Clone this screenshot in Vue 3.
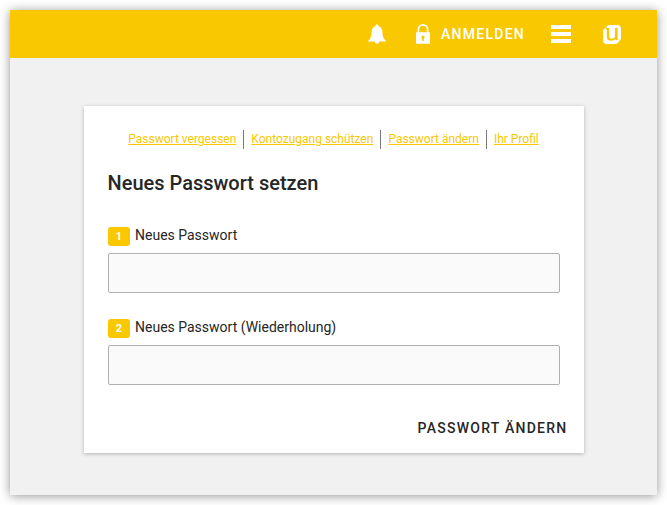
<script setup>
const links = ['Passwort vergessen', 'Kontozugang schützen', 'Passwort ändern', 'Ihr Profil']
const fields = ['Neues Passwort', 'Neues Passwort (Wiederholung)']
</script>

<template>
  <div class="window">
    <header class="bar">
      <svg class="bell" width="20" height="20" viewBox="0 0 20 20" fill="#fff">
        <path d="M10 .4c.9 0 1.500.6 1.500 1.400v.4c2.600.8 3.800 2.900 3.900 5.500.1 3.100.5 5.600 1.700 7.200l1.900 2v.7H1v-.7l1.900-2c1.200-1.600 1.600-4.100 1.700-7.200.1-2.600 1.300-4.700 3.900-5.500v-.4C8.500 1 9.100.4 10 .4zM7.700 17.600h4.600a2.300 2.200 0 0 1-4.600 0z" />
      </svg>
      <a class="login" href="#">
        <svg class="lock" width="16" height="20" viewBox="0 0 16 20">
          <path d="M3.400 9V5.300a4.600 4.400 0 0 1 9.200 0V9" fill="none" stroke="#fff" stroke-width="1.700" />
          <path d="M1.600 8.300h12.800q.6 0 .6.600v10.300q0 .6-.6.600H1.600q-.6 0-.6-.6V8.900q0-.6.6-.6z" fill="#fff" />
          <path d="M8 11.600a1.800 1.800 0 0 1 .8 3.300V17H7.200v-2.100A1.800 1.800 0 0 1 8 11.600z" fill="#fac800" />
        </svg>
        <span>ANMELDEN</span>
      </a>
      <div class="menu"><i /><i /><i /></div>
      <svg class="logo" width="20" height="20" viewBox="0 0 20 20">
        <path d="M1 7.500Q1 4.500 4 4Q4.500 1 8 1H15Q19 1 19 5V13.500Q19 16 17 17.500Q15.500 20 12.500 20H5Q1 20 1 16Z" fill="#fff" />
        <path d="M4 4H7.200V12Q7.200 14.800 9.600 14.800Q13 14.800 13 11.500V4H15.600V15.900H13.500V15Q12 16.800 9 16.800Q4.800 16.800 4.800 12.800V5.500H4Z" fill="#fac800" />
      </svg>
    </header>
    <main class="content">
      <form class="card" @submit.prevent>
        <nav class="links">
          <a v-for="link in links" :key="link" href="#">{{ link }}</a>
        </nav>
        <h1>Neues Passwort setzen</h1>
        <div v-for="(field, i) in fields" :key="field" class="field">
          <label :for="'password-' + i"><b>{{ i + 1 }}</b><span>{{ field }}</span></label>
          <input :id="'password-' + i" type="password">
        </div>
        <button type="submit">PASSWORT ÄNDERN</button>
      </form>
    </main>
  </div>
</template>

<style>
body {
  background: #fff;
}
#app {
  box-sizing: border-box;
  height: 505px;
  padding: 10px;
}
</style>

<style scoped>
.window {
  box-sizing: border-box;
  width: 647px;
  height: 485px;
  background: #f1f1f1;
  box-shadow: 0 1px 10px rgba(0, 0, 0, .42);
  font-family: Roboto, sans-serif;
  color: #262626;
}
.bar {
  box-sizing: border-box;
  height: 48px;
  padding-right: 35px;
  display: flex;
  align-items: center;
  justify-content: flex-end;
  background: #fac800;
}
.login {
  display: flex;
  align-items: center;
  margin: 0 26px 0 28px;
  color: #fff;
  font-size: 14px;
  font-weight: 500;
  letter-spacing: 1.25px;
  text-decoration: none;
}
.lock {
  margin-right: 10px;
}
.menu {
  display: flex;
  flex-direction: column;
  gap: 3px;
  width: 20px;
  margin-right: 31px;
}
.menu i {
  height: 4px;
  background: #fff;
}
.content {
  display: flex;
  justify-content: center;
  padding-top: 48px;
}
.card {
  box-sizing: border-box;
  width: 500px;
  height: 347px;
  padding: 24px;
  background: #fff;
  box-shadow: 0 1px 4px rgba(0, 0, 0, .26);
}
.links {
  display: flex;
  justify-content: center;
  height: 19px;
}
.links a {
  color: #fac800;
  font-size: 12px;
  line-height: 18px;
}
.links a + a {
  display: flex;
}
.links a + a::before {
  content: '';
  width: 1px;
  height: 19px;
  margin: 0 7px;
  background: #777;
}
h1 {
  margin: 22px 0 0;
  font-size: 20px;
  font-weight: 500;
  line-height: 24px;
}
.field {
  height: 67px;
  margin-top: 25px;
}
h1 + .field {
  margin-top: 31px;
}
label {
  display: flex;
  align-items: flex-start;
  height: 27px;
  font-size: 14px;
  line-height: 18px;
}
label b {
  box-sizing: border-box;
  width: 22px;
  height: 19px;
  margin: 1px 5.500px 0 0;
  padding-left: 1px;
  border-radius: 3px;
  background: #fac800;
  color: #fff;
  font-size: 11px;
  line-height: 19px;
  text-align: center;
}
input {
  box-sizing: border-box;
  display: block;
  width: 452px;
  height: 40px;
  border: 1px solid #b0b0b0;
  border-radius: 2px;
  background: #fafafa;
}
button {
  display: block;
  margin: 35px -8px 0 auto;
  padding: 0;
  border: 0;
  background: none;
  color: #262626;
  font: 500 14px/16px Roboto, sans-serif;
  letter-spacing: 1.25px;
}
</style>
